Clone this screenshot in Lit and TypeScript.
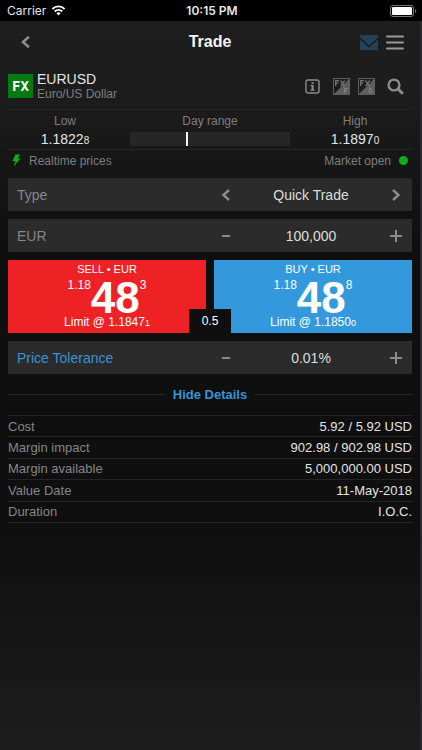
import { LitElement, html, css, svg } from "lit";
import { customElement, property, state } from "lit/decorators.js";

const chevronLeft = svg`<svg width="10" height="12" viewBox="0 0 10 12" aria-hidden="true"><path d="M8 1 2.5 6 8 11" fill="none" stroke="currentColor" stroke-width="2.4"/></svg>`;
const chevronRight = svg`<svg width="10" height="12" viewBox="0 0 10 12" aria-hidden="true"><path d="M2 1 7.5 6 2 11" fill="none" stroke="currentColor" stroke-width="2.4"/></svg>`;
const minus = svg`<svg width="14" height="14" viewBox="0 0 14 14" aria-hidden="true"><path d="M3 7h8" stroke="currentColor" stroke-width="2"/></svg>`;
const plus = svg`<svg width="14" height="14" viewBox="0 0 14 14" aria-hidden="true"><path d="M1 7h12M7 1v12" stroke="currentColor" stroke-width="2"/></svg>`;

@customElement("stepper-field")
class StepperField extends LitElement {
  @property() label = "";
  @property() value = "";
  @property() kind: "choice" | "amount" = "amount";
  @property({ type: Boolean }) accent = false;

  static styles = css`
    :host {
      display: grid;
      grid-template-columns: 1fr 1fr;
      align-items: center;
      height: 33px;
      background: #2b2b2b;
      color: #868686;
      font: 14px/20px "Liberation Sans", Arial, sans-serif;
    }
    .label {
      padding-left: 9px;
    }
    .accent {
      color: #3893d3;
    }
    .controls {
      display: flex;
      align-items: center;
      min-width: 0;
    }
    .step {
      display: flex;
      align-items: center;
      justify-content: center;
      width: 32px;
      height: 33px;
      flex: none;
      padding: 0;
      border: 0;
      background: none;
      color: #8c8c8c;
    }
    .value {
      flex: 1;
      min-width: 0;
      width: 0;
      padding: 0;
      border: 0;
      background: none;
      text-align: center;
      color: #dedede;
      font: inherit;
    }
  `;

  render() {
    const choice = this.kind === "choice";
    return html`
      <label class="label ${this.accent ? "accent" : ""}" for="value">${this.label}</label>
      <div class="controls">
        <button class="step" aria-label="${choice ? "Previous" : "Decrease"}">${choice ? chevronLeft : minus}</button>
        <input class="value" id="value" .value=${this.value} ?readonly=${choice} />
        <button class="step" aria-label="${choice ? "Next" : "Increase"}">${choice ? chevronRight : plus}</button>
      </div>
    `;
  }
}

@customElement("price-button")
class PriceButton extends LitElement {
  @property() side: "sell" | "buy" = "sell";
  @property() big = "";
  @property() handle = "";
  @property() pip = "";
  @property() limit = "";
  @property() limitPip = "";

  static styles = css`
    :host {
      display: block;
    }
    .price {
      display: flex;
      flex-direction: column;
      align-items: center;
      width: 100%;
      height: 73px;
      padding: 2px 0 0;
      border: 0;
      color: #fff;
      font: 12px/14px "Liberation Sans", Arial, sans-serif;
    }
    .sell {
      background: #ee2224;
    }
    .buy {
      background: #3399dc;
    }
    .title {
      font-size: 11px;
    }
    .quote {
      display: flex;
      height: 38px;
      padding-top: 1px;
    }
    .quote-side {
      line-height: 16px;
    }
    .main {
      font-size: 44px;
      line-height: 42px;
      font-weight: bold;
    }
    .small {
      font-size: 9px;
    }
  `;

  render() {
    return html`
      <button class="price ${this.side}">
        <span class="title">${this.side.toUpperCase()} • EUR</span>
        <span class="quote">
          <span class="quote-side">${this.handle}</span>
          <span class="main">${this.big}</span>
          <span class="quote-side">${this.pip}</span>
        </span>
        <span>Limit @ ${this.limit}<span class="small">${this.limitPip}</span></span>
      </button>
    `;
  }
}

@customElement("app-root")
class AppRoot extends LitElement {
  @state() open = true;

  details = [
    ["Cost", "5.92 / 5.92 USD"],
    ["Margin impact", "902.98 / 902.98 USD"],
    ["Margin available", "5,000,000.00 USD"],
    ["Value Date", "11-May-2018"],
    ["Duration", "I.O.C."],
  ];

  static styles = css`
    :host {
      display: flex;
      flex-direction: column;
      min-height: 100vh;
      background: #000;
      color: #e4e4e4;
      font: 12px/16px "Liberation Sans", Arial, sans-serif;
    }
    .status {
      display: grid;
      grid-template-columns: 1fr auto 1fr;
      align-items: center;
      height: 21px;
      padding: 0 5px 0 7px;
      font: 12px/14px Inter, sans-serif;
      color: #e6e6e6;
    }
    .carrier {
      display: flex;
      align-items: center;
      gap: 5px;
    }
    .clock {
      font-weight: 600;
    }
    .battery {
      justify-self: end;
    }
    .screen {
      flex: 1;
      padding: 0 8px;
      border-right: 2px solid #29292b;
      background: linear-gradient(#1e1e1e 0, #1c1c1c 80px, #0f0f0f 220px, #0f0f0f 70%, #1d1d1d 100%);
    }
    .header {
      display: grid;
      grid-template-columns: 1fr auto 1fr;
      align-items: center;
      height: 42px;
    }
    .title {
      margin: 0;
      font-size: 16px;
      line-height: 20px;
      color: #f4f4f4;
    }
    .icon-button {
      display: flex;
      padding: 0;
      border: 0;
      background: none;
      color: #8c8c8c;
    }
    .back {
      padding-left: 12px;
    }
    .header-actions {
      display: flex;
      justify-content: flex-end;
      align-items: center;
      gap: 8px;
      padding-right: 8px;
    }
    .instrument {
      display: flex;
      align-items: center;
      gap: 4px;
      height: 46px;
    }
    .fx {
      width: 25px;
      height: 24px;
      background: #057a12;
      color: #fff;
      text-align: center;
      font: bold 14px/24px "DejaVu Sans Mono", monospace;
    }
    .names {
      flex: 1;
    }
    .symbol {
      margin: 0;
      font-size: 14px;
      line-height: 16px;
      font-weight: normal;
    }
    .muted {
      color: #7e7e7e;
    }
    .name {
      margin: 0;
      line-height: 14px;
    }
    .tools {
      display: flex;
      align-items: center;
      gap: 8px;
      padding-right: 8px;
    }
    .info {
      margin-right: 5px;
    }
    .search {
      margin-left: 4px;
    }
    .range {
      display: grid;
      grid-template-columns: 1fr 160px 1fr;
      grid-auto-rows: min-content;
      column-gap: 8px;
      row-gap: 1px;
      justify-items: center;
      height: 41px;
      box-sizing: border-box;
      padding-top: 3px;
      border-top: 1px solid #272727;
      border-bottom: 1px solid #272727;
      text-align: center;
    }
    .range-value {
      font-size: 14px;
      line-height: 18px;
    }
    .pip {
      font-size: 10px;
    }
    .track {
      width: 100%;
      height: 14px;
      margin-top: 2px;
      background: #262626;
    }
    .marker {
      display: block;
      width: 2px;
      height: 100%;
      background: #f2f2f2;
    }
    .market {
      display: flex;
      align-items: center;
      height: 21px;
      padding: 0 4px;
      gap: 8px;
    }
    .open {
      margin-left: auto;
    }
    .dot {
      width: 9px;
      height: 9px;
      border-radius: 50%;
      background: #0fae13;
    }
    .ticket {
      display: grid;
      gap: 8px;
      padding-top: 7px;
    }
    .prices {
      display: grid;
      grid-template-columns: 1fr 1fr;
      gap: 8px;
      position: relative;
    }
    .spread {
      position: absolute;
      bottom: 0;
      left: 50%;
      width: 42px;
      margin-left: -21px;
      background: #0f0f0f;
      color: #fff;
      text-align: center;
      line-height: 24px;
    }
    .toggle {
      display: flex;
      align-items: center;
      gap: 8px;
      width: 100%;
      height: 41px;
      padding: 0;
      border: 0;
      background: none;
      color: #3893d3;
      font: bold 13px/16px "Liberation Sans", Arial, sans-serif;
    }
    .rule {
      flex: 1;
      height: 1px;
      background: #242424;
    }
    .details {
      width: 100%;
      height: 108px;
      border-collapse: collapse;
      font-size: 13px;
      line-height: 16px;
    }
    .row {
      border-top: 1px solid #242424;
      border-bottom: 1px solid #242424;
    }
    .key,
    .amount {
      padding: 1px 0 0;
    }
    .key {
      text-align: left;
      font-weight: normal;
      color: #868686;
    }
    .amount {
      text-align: right;
    }
  `;

  fxBadge(letter: string) {
    return html`<svg width="17" height="17" viewBox="0 0 17 17" aria-hidden="true">
      <rect width="17" height="17" fill="#5e5e5e" />
      <path d="M1 1h15L1 16z" fill="#1c1c1c" />
      <g fill="none" stroke="#747474" stroke-width="1.3">
        <path d="M2.7 8V2.6H6M2.7 5.2h2.6M7.5 2.5l4.2 5.8M11.7 2.5 7.5 8.3" />
      </g>
      <path
        d=${letter === "F" ? "M11.5 15V10.5H15M11.5 12.7H14" : "M11.3 10.5h1.6l1.3 1.2v1.8l-1.3 1.2h-1.6z"}
        fill="none"
        stroke="#858585"
        stroke-width="1"
      />
    </svg>`;
  }

  render() {
    return html`
      <div class="status">
        <span class="carrier">
          Carrier
          <svg width="15" height="11" viewBox="0 0 14 11" aria-hidden="true">
            <g fill="none" stroke="#fff" stroke-width="1.8">
              <path d="M.9 4a8.6 8.6 0 0 1 12.2 0" />
              <path d="M3.3 6.5a5.2 5.2 0 0 1 7.4 0" />
            </g>
            <path d="M7 10.4 4.9 8.2a3 3 0 0 1 4.2 0z" fill="#fff" />
          </svg>
        </span>
        <span class="clock">10:15 PM</span>
        <svg class="battery" width="27" height="12" viewBox="0 0 27 12" aria-hidden="true">
          <rect x=".5" y=".5" width="23" height="11" rx="2.5" fill="none" stroke="#777" />
          <rect x="2" y="2" width="20" height="8" rx="1" fill="#fff" />
          <path d="M25 4a2.2 2.2 0 0 1 0 4z" fill="#777" />
        </svg>
      </div>
      <main class="screen">
        <header class="header">
          <button class="icon-button back" aria-label="Back">
            <svg width="11" height="12" viewBox="0 0 11 12" aria-hidden="true">
              <path d="M9 .8 3 6l6 5.2" fill="none" stroke="currentColor" stroke-width="2.6" />
            </svg>
          </button>
          <h1 class="title">Trade</h1>
          <div class="header-actions">
            <button class="icon-button" aria-label="Messages">
              <svg width="18" height="15" viewBox="0 0 18 15" aria-hidden="true">
                <rect width="18" height="15" fill="#234158" />
                <path d="M0 3.4 9 11.5 18 3.4" fill="none" stroke="#1a1e22" stroke-width="1.6" />
              </svg>
            </button>
            <button class="icon-button" aria-label="Menu">
              <svg width="18" height="15" viewBox="0 0 18 15" aria-hidden="true">
                <path d="M1 1.5h16M1 7.5h16M1 13.5h16" stroke="#999" stroke-width="2" stroke-linecap="round" />
              </svg>
            </button>
          </div>
        </header>
        <section class="instrument">
          <span class="fx">FX</span>
          <div class="names">
            <h2 class="symbol">EURUSD</h2>
            <p class="name muted">Euro/US Dollar</p>
          </div>
          <div class="tools">
            <button class="icon-button info" aria-label="Info">
              <svg width="15" height="15" viewBox="0 0 15 15" aria-hidden="true">
                <rect x="1" y="1" width="13" height="13" rx="2" fill="none" stroke="currentColor" stroke-width="1.4" />
                <path d="M6.6 3.2h2v1.8h-2zM5.5 6h3.1v4.6h1v1.2H5.5v-1.2h1V7.2h-1z" fill="currentColor" />
              </svg>
            </button>
            <button class="icon-button" aria-label="FX forward">${this.fxBadge("F")}</button>
            <button class="icon-button" aria-label="FX option">${this.fxBadge("O")}</button>
            <button class="icon-button search" aria-label="Search">
              <svg width="17" height="17" viewBox="0 0 17 17" aria-hidden="true">
                <circle cx="7" cy="7" r="5.4" fill="none" stroke="currentColor" stroke-width="2.4" />
                <path d="m10.8 10.8 5 5" stroke="currentColor" stroke-width="3" />
              </svg>
            </button>
          </div>
        </section>
        <section class="range">
          <span class="muted">Low</span>
          <span class="muted">Day range</span>
          <span class="muted">High</span>
          <span class="range-value">1.1822<span class="pip">8</span></span>
          <div class="track"><span class="marker" style="margin-left:35%"></span></div>
          <span class="range-value">1.1897<span class="pip">0</span></span>
        </section>
        <div class="market muted">
          <svg width="9" height="13" viewBox="0 0 9 13" aria-hidden="true">
            <path d="M3.4.5H8L5.8 4.6h2.8L1.6 12.6 3.6 7.2H.4z" fill="#0fae13" />
          </svg>
          <span>Realtime prices</span>
          <span class="open">Market open</span>
          <span class="dot"></span>
        </div>
        <section class="ticket">
          <stepper-field kind="choice" label="Type" value="Quick Trade"></stepper-field>
          <stepper-field label="EUR" value="100,000"></stepper-field>
          <div class="prices">
            <price-button side="sell" handle="1.18" big="48" pip="3" limit="1.1847" limitPip="1"></price-button>
            <price-button side="buy" handle="1.18" big="48" pip="8" limit="1.1850" limitPip="0"></price-button>
            <span class="spread">0.5</span>
          </div>
          <stepper-field accent label="Price Tolerance" value="0.01%"></stepper-field>
        </section>
        <button class="toggle" aria-expanded=${this.open} @click=${() => (this.open = !this.open)}>
          <span class="rule"></span>${this.open ? "Hide Details" : "Show Details"}<span class="rule"></span>
        </button>
        ${this.open
          ? html`<table class="details">
              <tbody>
                ${this.details.map(
                  ([k, v]) => html`<tr class="row"><th class="key" scope="row">${k}</th><td class="amount">${v}</td></tr>`
                )}
              </tbody>
            </table>`
          : ""}
      </main>
    `;
  }
}
